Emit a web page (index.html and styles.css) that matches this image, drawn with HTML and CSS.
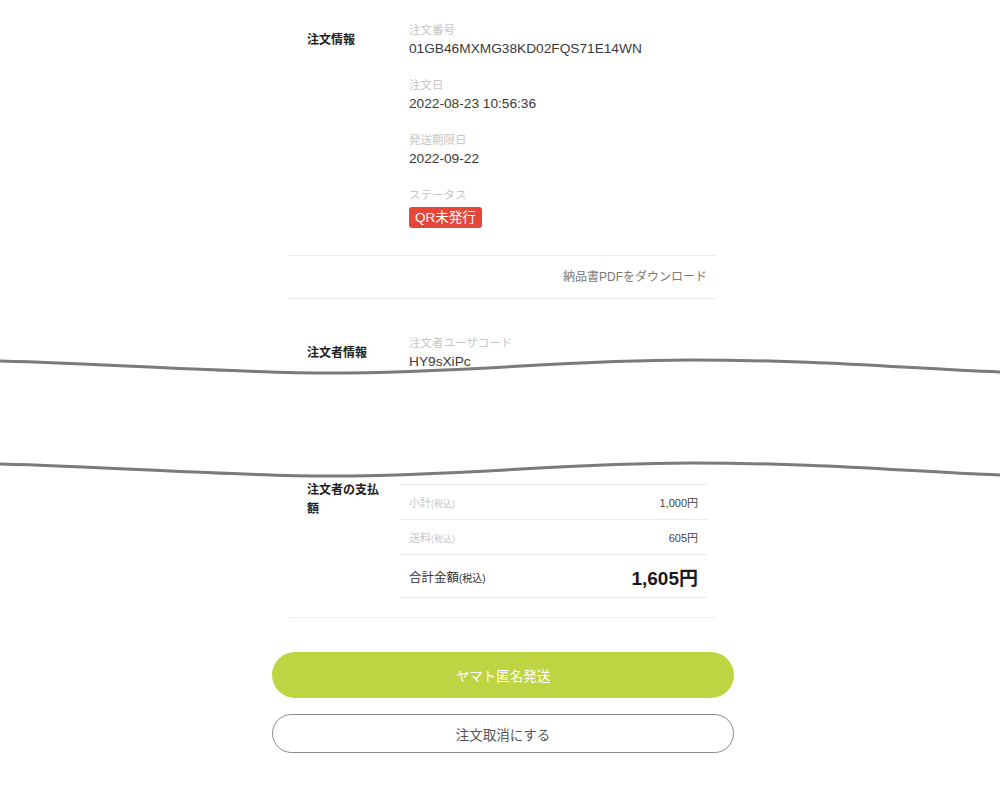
FILE: index.html
```html
<!DOCTYPE html>
<html lang="ja">
<head>
<meta charset="utf-8">
<title>注文詳細</title>
<link rel="stylesheet" href="styles.css">
</head>
<body>
<div class="page">
  <section class="section info">
    <div class="sec-label">注文情報</div>
    <div class="fields">
      <div class="field">
        <div class="field-label">注文番号</div>
        <div class="field-value">01GB46MXMG38KD02FQS71E14WN</div>
      </div>
      <div class="field">
        <div class="field-label">注文日</div>
        <div class="field-value">2022-08-23 10:56:36</div>
      </div>
      <div class="field">
        <div class="field-label">発送期限日</div>
        <div class="field-value">2022-09-22</div>
      </div>
      <div class="field">
        <div class="field-label">ステータス</div>
        <div class="badge-wrap"><span class="badge">QR未発行</span></div>
      </div>
    </div>
  </section>
  <div class="download">納品書PDFをダウンロード</div>
  <section class="section buyer">
    <div class="sec-label">注文者情報</div>
    <div class="fields">
      <div class="field">
        <div class="field-label">注文者ユーザコード</div>
        <div class="field-value">HY9sXiPc</div>
      </div>
    </div>
  </section>
</div>

<div class="tear">
  <svg class="tear-svg" viewBox="0 0 1000 140" preserveAspectRatio="none" aria-hidden="true">
    <path class="tear-fill" d="M0,9 C120,12 230,21 330,21 C470,21 560,8 690,8 C820,8 900,16 1000,20 L1000,123 C900,119 820,111 690,111 C560,111 470,124 330,124 C230,124 120,115 0,112 Z"/>
    <path class="tear-line" d="M0,9 C120,12 230,21 330,21 C470,21 560,8 690,8 C820,8 900,16 1000,20"/>
    <path class="tear-line" d="M0,112 C120,115 230,124 330,124 C470,124 560,111 690,111 C820,111 900,119 1000,123"/>
  </svg>
</div>

<div class="page">
  <section class="section payment">
    <div class="sec-label">注文者の支払額</div>
    <div class="pay-table">
      <div class="pay-row">
        <span class="pay-name">小計<small>(税込)</small></span>
        <span class="pay-amount">1,000円</span>
      </div>
      <div class="pay-row">
        <span class="pay-name">送料<small>(税込)</small></span>
        <span class="pay-amount">605円</span>
      </div>
      <div class="pay-row total">
        <span class="pay-name">合計金額<small>(税込)</small></span>
        <span class="pay-amount">1,605円</span>
      </div>
    </div>
  </section>
  <div class="actions">
    <button class="btn btn-primary" type="button">ヤマト匿名発送</button>
    <button class="btn btn-outline" type="button">注文取消にする</button>
  </div>
</div>
</body>
</html>
```

FILE: styles.css
```css
* {
  box-sizing: border-box;
}

html, body {
  margin: 0;
  padding: 0;
  background: #ffffff;
}

body {
  font-family: "Liberation Sans", "Noto Sans CJK JP", sans-serif;
  color: #333333;
  overflow: hidden;
}

.page {
  width: 468px;
  margin: 0 auto;
  padding-left: 6px;
}

.section {
  display: flex;
  margin: 0 17px;
}

.sec-label {
  flex: none;
  width: 111px;
  padding-left: 18px;
  padding-right: 13px;
  margin-top: 10px;
  font-size: 12px;
  line-height: 18px;
  font-weight: bold;
  color: #222222;
}

.fields {
  flex: 1;
  padding-left: 9px;
}

.field + .field {
  margin-top: 17px;
}

.field-label {
  font-size: 11.5px;
  line-height: 18px;
  color: #c6c6c6;
}

.field-value {
  font-size: 13.7px;
  line-height: 20px;
  color: #3a3a3a;
}

.badge-wrap {
  display: flex;
  padding-top: 3px;
}

.badge {
  height: 21px;
  padding: 0 6px;
  border-radius: 3px;
  background: #e4463a;
  color: #ffffff;
  font-size: 13.5px;
  line-height: 21px;
}

.info {
  padding-top: 21px;
  padding-bottom: 27px;
  border-bottom: 1px solid #ededed;
}

.download {
  margin: 0 17px;
  padding: 12px 10px 12px 11px;
  text-align: right;
  font-size: 12px;
  line-height: 18px;
  color: #7a7a7a;
  border-bottom: 1px solid #ededed;
}

.buyer {
  padding-top: 35px;
}

.tear {
  position: relative;
  height: 108px;
}

.tear-svg {
  position: absolute;
  left: 0;
  top: -20px;
  width: 100%;
  height: 140px;
  overflow: visible;
}

.tear-fill {
  fill: #ffffff;
}

.tear-line {
  fill: none;
  stroke: #7b7b7b;
  stroke-width: 3;
}

.payment {
  padding-bottom: 19px;
  border-bottom: 1px solid #ededed;
}

.payment .sec-label {
  margin-top: 0;
  padding-top: 1px;
  line-height: 19px;
}

.pay-table {
  flex: 1;
  margin-top: 4px;
  margin-right: 9px;
  border-top: 1px solid #ededed;
}

.pay-row {
  display: flex;
  align-items: center;
  justify-content: space-between;
  height: 35px;
  padding: 0 10px 0 9px;
  border-bottom: 1px solid #ededed;
}

.pay-name {
  font-size: 11px;
  color: #c6c6c6;
}

.pay-name small {
  font-size: 9px;
}

.pay-amount {
  font-size: 11px;
  color: #444444;
}

.pay-row.total {
  height: 43px;
}

.total .pay-name {
  font-size: 12.5px;
  color: #333333;
}

.total .pay-name small {
  font-size: 10px;
}

.total .pay-amount {
  font-size: 19px;
  font-weight: bold;
  color: #1a1a1a;
}

.actions {
  display: flex;
  flex-direction: column;
  padding-top: 34px;
}

.btn {
  display: block;
  width: 100%;
  font-family: "Liberation Sans", "Noto Sans CJK JP", sans-serif;
  font-size: 13.5px;
  cursor: pointer;
}

.btn-primary {
  height: 46px;
  border: none;
  border-radius: 23px;
  background: #bfd443;
  color: #ffffff;
  font-weight: 400;
}

.btn-outline {
  height: 39px;
  margin-top: 16px;
  border: 1.5px solid #8a8a8a;
  border-radius: 20px;
  background: #ffffff;
  color: #555555;
}
```
